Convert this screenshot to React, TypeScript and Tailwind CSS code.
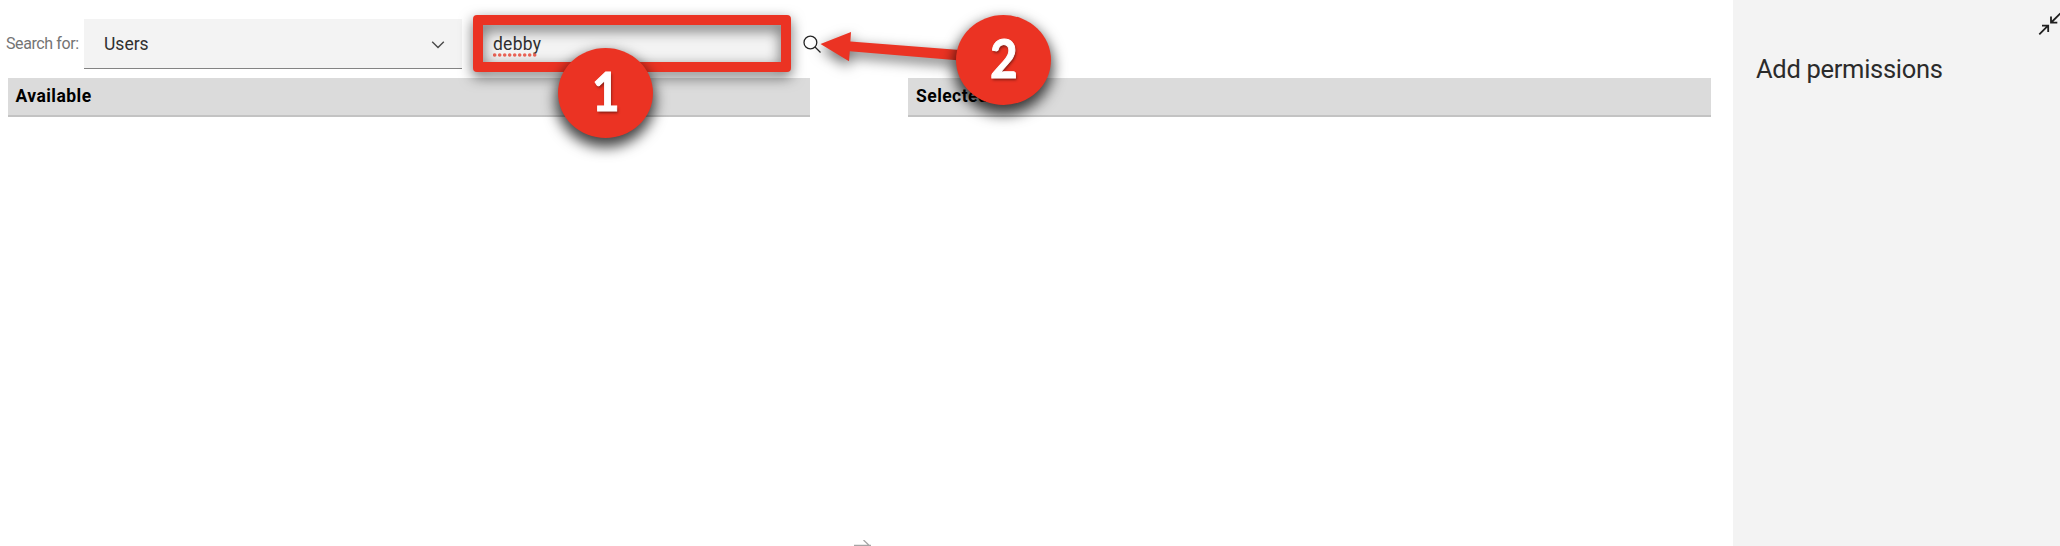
import React from "react";

function ChevronDown() {
  return (
    <svg className="mr-[15px] h-[18px] w-[18px] shrink-0" viewBox="0 0 18 18" fill="none" stroke="#4a4a4a" strokeWidth="1.4">
      <path d="M3.2 6.7 9 12.6l5.8-5.9" />
    </svg>
  );
}

function SearchIcon() {
  return (
    <svg className="mt-4 ml-[12px] h-[18px] w-[18px] shrink-0" viewBox="0 0 18 18" fill="none" stroke="#262626" strokeWidth="1.3">
      <circle cx="7.4" cy="7.5" r="6.4" />
      <path d="m12 12 5.5 5.5" />
    </svg>
  );
}

function MinimizeIcon() {
  return (
    <svg className="mt-3 h-[23px] w-[22px]" viewBox="0 0 22 23" fill="none" stroke="#1f1f1f" strokeWidth="1.8">
      <path d="M1.3 22.3 10 13.6M4 13.7h6.2v6.2M22.4 1.3l-9.2 9.2M13 4.4v6.3h6.3" />
    </svg>
  );
}

function PanelHeader({ title }: { title: string }) {
  return (
    <h2 className="h-[39px] border-b-2 border-[#c3c3c3] bg-[#dbdbdb] pl-2 text-[17.5px] leading-[36px] font-bold tracking-[0.45px] whitespace-nowrap text-black">
      {title}
    </h2>
  );
}

function Badge({ value, className }: { value: string; className: string }) {
  return (
    <div className={"absolute flex h-[90px] w-[95px] items-center justify-center rounded-[50%] bg-[#eb3323] shadow-[0_7px_14px_2px_rgba(0,0,0,0.75)] " + className}>
      <span className="translate-x-[0.5px] -translate-y-[3px] scale-x-[0.9] font-['Lato',sans-serif] text-[53px] leading-none font-bold text-white [-webkit-text-stroke:1px_white] [text-shadow:1px_2px_3px_rgba(0,0,0,0.45)]">
        {value}
      </span>
    </div>
  );
}

export default function App() {
  return (
    <div className="relative flex h-[546px] w-[2060px] overflow-hidden bg-white font-['Roboto','Liberation_Sans',sans-serif]">
      <main className="flex w-[1733px] shrink-0 flex-col">
        <div className="flex h-[78px] items-start pt-[19px]">
          <label className="w-[84px] shrink-0 pl-[6px] text-[16px] leading-[50px] tracking-[-0.4px] whitespace-nowrap text-[#747474]">
            Search for:
          </label>
          <div className="flex h-[50px] w-[377.5px] shrink-0 items-center justify-between border-b border-[#838383] bg-[#f3f3f3] pl-5 text-[17.5px] text-[#303030]">
            <span className="pt-[2px]">Users</span>
            <ChevronDown />
          </div>
          <div className="ml-[11.5px] flex h-[50px] w-[318px] shrink-0 items-center bg-[#f3f3f3] pl-5 text-[17.5px] tracking-[0.25px] text-[#303030]">
            <span className="relative pt-px">
              debby
              <svg className="absolute top-[22.5px] left-0 h-1 w-[45px]" viewBox="0 0 45 4">
                <path d="M1.7 2H44" stroke="#ee6457" strokeWidth="3.6" strokeLinecap="round" strokeDasharray="0 5" />
              </svg>
            </span>
          </div>
          <SearchIcon />
        </div>
        <div className="flex flex-1 pl-[7.5px]">
          <section className="w-[802px]">
            <PanelHeader title="Available" />
          </section>
          <div className="flex w-[98.5px] flex-col justify-end pl-[43px]">
            <svg className="h-[6px] w-[20px]" viewBox="0 0 20 6" fill="none" stroke="#a6a6a6" strokeWidth="1.3">
              <path d="M1 5.3h17M10.5 0l5.5 5.2" />
            </svg>
          </div>
          <section className="w-[802.5px]">
            <PanelHeader title="Selected" />
          </section>
        </div>
      </main>
      <aside className="flex flex-1 flex-col bg-[#f3f3f3]">
        <div className="flex h-[48px] justify-end">
          <MinimizeIcon />
        </div>
        <h1 className="pl-[23px] text-[25.5px] leading-[42px] tracking-[-0.3px] whitespace-nowrap text-[#2b2b2b]">Add permissions</h1>
      </aside>

      <svg className="absolute top-0 left-0 h-[160px] w-[1080px] [filter:drop-shadow(0_5px_7px_rgba(0,0,0,0.6))]" viewBox="0 0 1080 160" fill="#eb3323">
        <path fillRule="evenodd" d="M477 15h310a4 4 0 0 1 4 4v49a4 4 0 0 1-4 4H477a4 4 0 0 1-4-4V19a4 4 0 0 1 4-4ZM483 25v37h298V25Z" />
        <path d="m820.5 44 30.5-12-.6 9.5L960 50v10.5L849.8 51.3 849 61.3Z" />
      </svg>
      <Badge value="1" className="top-[48px] left-[558px]" />
      <Badge value="2" className="top-[15px] left-[956px]" />
    </div>
  );
}
